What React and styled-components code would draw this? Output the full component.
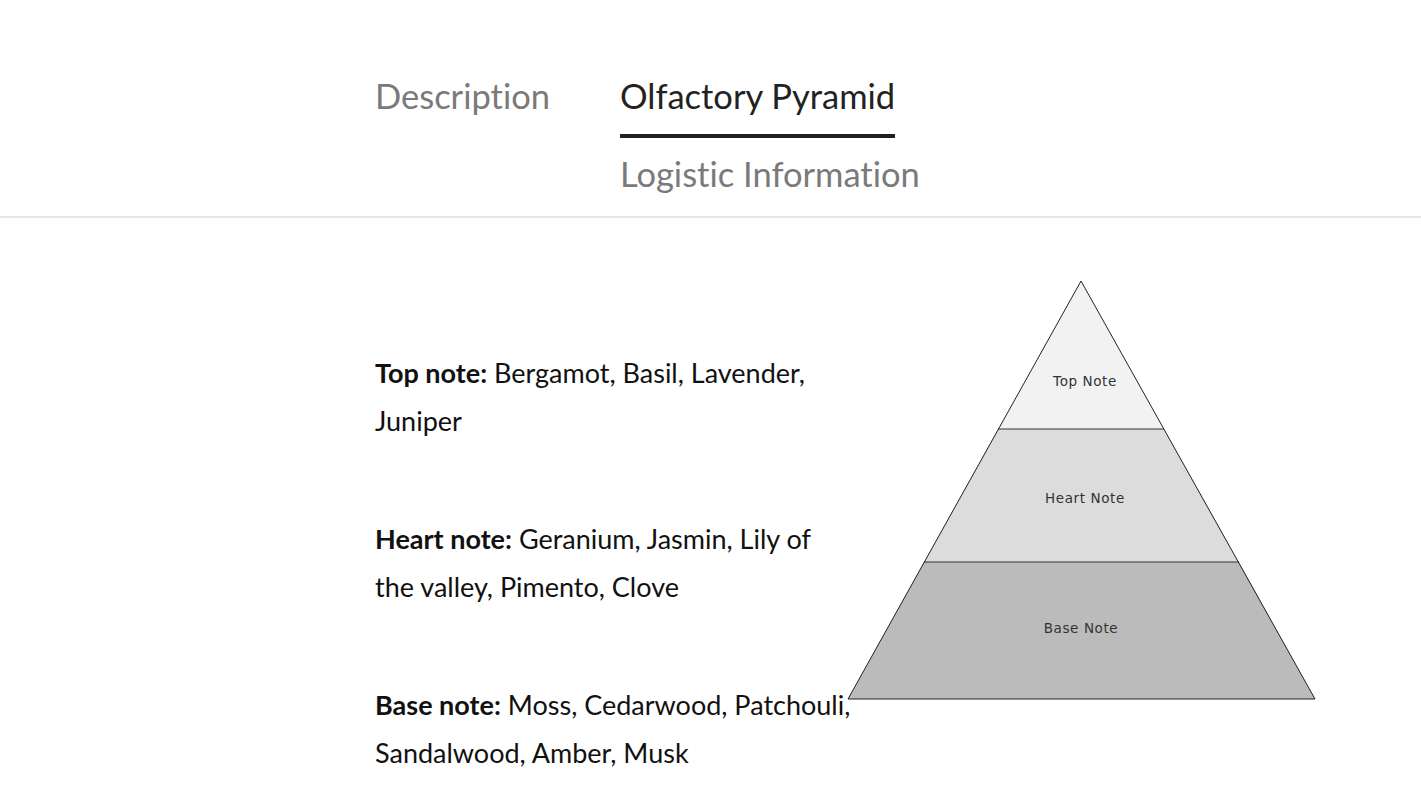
import React from 'react'
import styled, { createGlobalStyle } from 'styled-components'

const GlobalStyle = createGlobalStyle`
  body {
    margin: 0;
    background: #ffffff;
    font-family: Lato, "Open Sans", sans-serif;
    font-variant-ligatures: none;
  }
`;

const notes = [
  { label: 'Top note:', text: 'Bergamot, Basil, Lavender, Juniper' },
  { label: 'Heart note:', text: 'Geranium, Jasmin, Lily of the valley, Pimento, Clove' },
  { label: 'Base note:', text: 'Moss, Cedarwood, Patchouli, Sandalwood, Amber, Musk' },
]

function Pyramid() {
  return (
    <PyramidSvg width="470" height="422" viewBox="0 0 470 422">
      <polygon points="234,1 317,149 151,149" fill="#f2f2f2" />
      <polygon points="151,149 317,149 392,282 77,282" fill="#dcdcdc" />
      <polygon points="77,282 392,282 468,419 1,419" fill="#bbbbbb" />
      <line x1="151" y1="149" x2="317" y2="149" stroke="#333" strokeWidth="1" />
      <line x1="77" y1="282" x2="392" y2="282" stroke="#333" strokeWidth="1" />
      <polygon points="234,1 468,419 1,419" fill="none" stroke="#222" strokeWidth="1" />
      <NoteLabel x="238" y="106">Top Note</NoteLabel>
      <NoteLabel x="238" y="223">Heart Note</NoteLabel>
      <NoteLabel x="234" y="353">Base Note</NoteLabel>
    </PyramidSvg>
  )
}

function App() {
  return (
    <Page>
      <GlobalStyle />
      <TabBar>
        <Tab>Description</Tab>
        <Tab active>Olfactory Pyramid</Tab>
        <Tab col={2}>Logistic Information</Tab>
      </TabBar>
      <Content>
        <Notes>
          {notes.map(n => (
            <Note key={n.label}>
              <Label>{n.label}</Label>{' ' + n.text}
            </Note>
          ))}
        </Notes>
        <Pyramid />
      </Content>
    </Page>
  )
}

export default App

const Page = styled.div`
  width: 100%;
  min-height: 810px;
  background: #fff;
`;

const TabBar = styled.div`
  display: grid;
  grid-template-columns: 245px auto;
  justify-content: start;
  padding: 70px 0 16px 375px;
  border-bottom: solid 2px #e6e6e6;
`;

const Tab = styled.div`
  grid-column: ${p => p.col || 'auto'};
  justify-self: start;
  font-size: 34.5px;
  line-height: 52px;
  color: ${p => p.active ? '#222222' : '#7a7a7a'};
  padding-bottom: 12px;
  margin-bottom: 10px;
  border-bottom: solid 4px ${p => p.active ? '#222222' : 'transparent'};
  &:last-child {
    margin-bottom: 0;
    border-bottom: none;
    padding-bottom: 0;
  }
`;

const Content = styled.div`
  display: flex;
  flex-direction: row;
  align-items: flex-start;
  padding: 62px 0 0 375px;
`;

const Notes = styled.div`
  flex: 0 0 478px;
  padding-top: 69px;
  display: flex;
  flex-direction: column;
  gap: 70px;
`;

const Note = styled.p`
  margin: 0;
  font-size: 27px;
  line-height: 48px;
  color: #111;
`;

const Label = styled.b`
  font-weight: 700;
`;

const PyramidSvg = styled.svg`
  display: block;
  flex-shrink: 0;
  margin-left: -6px;
`;

const NoteLabel = styled.text`
  font-family: "DejaVu Sans", sans-serif;
  font-size: 13.5px;
  letter-spacing: 0.6px;
  fill: #333;
  text-anchor: middle;
`;
